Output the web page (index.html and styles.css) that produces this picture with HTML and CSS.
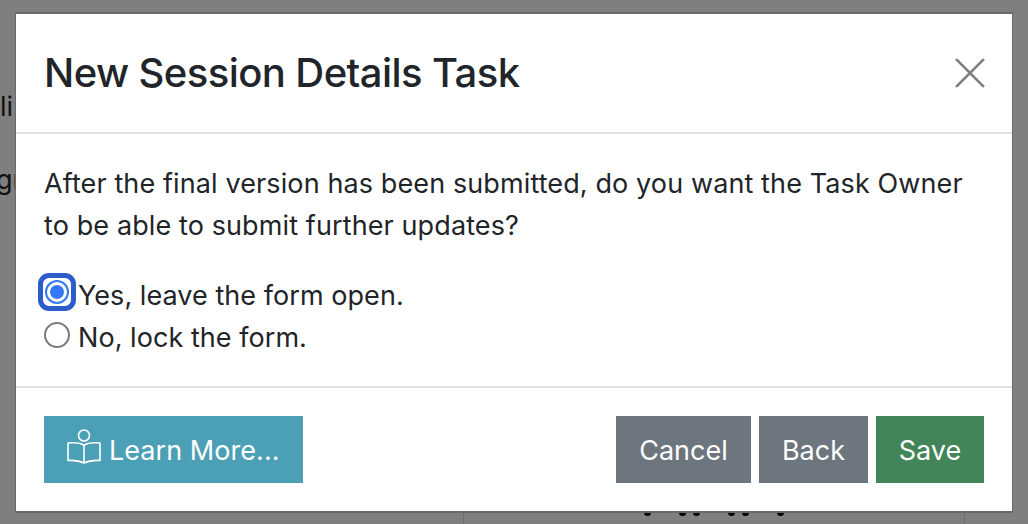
FILE: index.html
```html
<!DOCTYPE html>
<html lang="en">
<head>
    <meta charset="UTF-8">
    <meta name="viewport" content="width=device-width, initial-scale=1.0">
    <title>New Session Details Task</title>
    <link rel="stylesheet" href="styles.css">
</head>
<body>
    <div class="page-behind">
        <p class="behind-text behind-first">li</p>
        <p class="behind-text behind-second">gr</p>
        <div class="behind-card">
            <span class="behind-dots"><i></i><i></i><i></i><i></i><i></i><i></i></span>
        </div>
    </div>
    <div class="backdrop">
        <div class="modal">
            <header class="modal-header">
                <h1 class="modal-title">New Session Details Task</h1>
                <button class="close-btn" aria-label="Close">
                    <svg width="30" height="30" viewBox="0 0 32 32">
                        <path d="M2 2L30 30M30 2L2 30" stroke="#808080" stroke-width="3" stroke-linecap="round" fill="none"/>
                    </svg>
                </button>
            </header>
            <div class="modal-body">
                <p class="question">After the final version has been submitted, do you want the Task Owner to be able to submit further updates?</p>
                <div class="radio-row">
                    <span class="radio radio-on"><span class="radio-dot"></span></span>
                    <label>Yes, leave the form open.</label>
                </div>
                <div class="radio-row">
                    <span class="radio"></span>
                    <label>No, lock the form.</label>
                </div>
            </div>
            <footer class="modal-footer">
                <button class="btn btn-info">
                    <svg class="book-icon" width="36" height="36" viewBox="0 0 36 36" fill="none" stroke="#fff" stroke-width="1.6" stroke-linejoin="round">
                        <circle cx="18" cy="6.5" r="5.5"/>
                        <path d="M18 16.5C15 14 9 13.5 2 14V31.5C9 31 14 32 18 34C22 32 27 31 34 31.5V14C27 13.5 21 14 18 16.5Z"/>
                        <path d="M18 16.5V34"/>
                    </svg>
                    Learn More...
                </button>
                <div class="footer-actions">
                    <button class="btn btn-cancel">Cancel</button>
                    <button class="btn btn-back">Back</button>
                    <button class="btn btn-save">Save</button>
                </div>
            </footer>
        </div>
    </div>
</body>
</html>
```

FILE: styles.css
```css
* {
    box-sizing: border-box;
}
html, body {
    height: 100%;
}
body {
    margin: 0;
    overflow: hidden;
    background-color: #fff;
    font-family: Inter, "Liberation Sans", sans-serif;
    color: #212529;
}
.page-behind {
    height: 524px;
}
.behind-text {
    position: absolute;
    left: 0;
    margin: 0;
    font-size: 27px;
    line-height: 32px;
}
.behind-first {
    top: 91px;
}
.behind-second {
    top: 164px;
    left: -4px;
}
.behind-card {
    position: absolute;
    left: 463px;
    top: 500px;
    width: 502px;
    height: 24px;
    border-left: 1px solid #ddd;
    border-right: 1px solid #ddd;
}
.behind-dots i {
    position: absolute;
    top: 11px;
    width: 7px;
    height: 5px;
    background: #000;
    border-radius: 0 0 3.5px 3.5px;
}
.behind-dots i:nth-child(1) { left: 180px; }
.behind-dots i:nth-child(2) { left: 215px; }
.behind-dots i:nth-child(3) { left: 229px; }
.behind-dots i:nth-child(4) { left: 264px; }
.behind-dots i:nth-child(5) { left: 278px; }
.behind-dots i:nth-child(6) { left: 313px; }
.backdrop {
    position: fixed;
    top: 0;
    left: 0;
    right: 0;
    bottom: 0;
    padding: 12px 15px;
    background-color: rgba(0, 0, 0, 0.5);
}
.modal {
    width: 998px;
    height: 501px;
    border: 2px solid #6a6a6a;
    border-width: 2px 1px;
    background-color: #fff;
    display: flex;
    flex-direction: column;
}
.modal-header {
    height: 120px;
    padding: 0 27px 0 28px;
    display: flex;
    align-items: center;
    justify-content: space-between;
    border-bottom: 2px solid #dee2e6;
    flex-shrink: 0;
}
.modal-title {
    margin: 0;
    font-size: 40px;
    font-weight: 500;
    line-height: 48px;
    letter-spacing: -0.58px;
}
.close-btn {
    padding: 0;
    border: 0;
    background: none;
    display: flex;
}
.modal-body {
    flex: 1;
    padding: 29px 28px 0;
    font-size: 27px;
    line-height: 42px;
    letter-spacing: 0.11px;
}
.question {
    margin: 0 0 28px;
}
.radio-row {
    display: flex;
    align-items: center;
    height: 42px;
    letter-spacing: 0.05px;
}
.radio {
    position: relative;
    width: 26px;
    height: 26px;
    margin: -6px 8px 0 0;
    border: 2px solid #7b7b7b;
    border-radius: 50%;
    display: flex;
    align-items: center;
    justify-content: center;
    flex-shrink: 0;
}
.radio-on {
    width: 24px;
    height: 24px;
    margin: -8px 9px 0 1px;
    border-color: #3478f6;
}
.radio-on::before {
    content: "";
    position: absolute;
    top: -9px;
    left: -9px;
    right: -9px;
    bottom: -9px;
    border: 5px solid #2c5ecb;
    border-radius: 11px;
}
.radio-dot {
    width: 14px;
    height: 14px;
    border-radius: 50%;
    background: #3478f6;
}
.modal-footer {
    height: 125px;
    padding: 28px 28px 0;
    border-top: 2px solid #dee2e6;
    display: flex;
    justify-content: space-between;
    align-items: flex-start;
    flex-shrink: 0;
}
.footer-actions {
    display: flex;
    gap: 8px;
}
.btn {
    height: 67px;
    padding: 2px 0 0;
    border: 0;
    color: #fff;
    font-family: inherit;
    font-size: 27px;
    white-space: nowrap;
    display: flex;
    align-items: center;
    justify-content: center;
}
.btn-info {
    width: 259px;
    justify-content: flex-start;
    padding-left: 22px;
    gap: 7px;
    letter-spacing: 0.05px;
    background-color: #4ca0b6;
}
.book-icon {
    margin-top: -7px;
}
.btn-cancel {
    width: 135px;
    background-color: #6d757e;
}
.btn-back {
    width: 109px;
    background-color: #6d757e;
}
.btn-save {
    width: 108px;
    background-color: #418558;
}
```
